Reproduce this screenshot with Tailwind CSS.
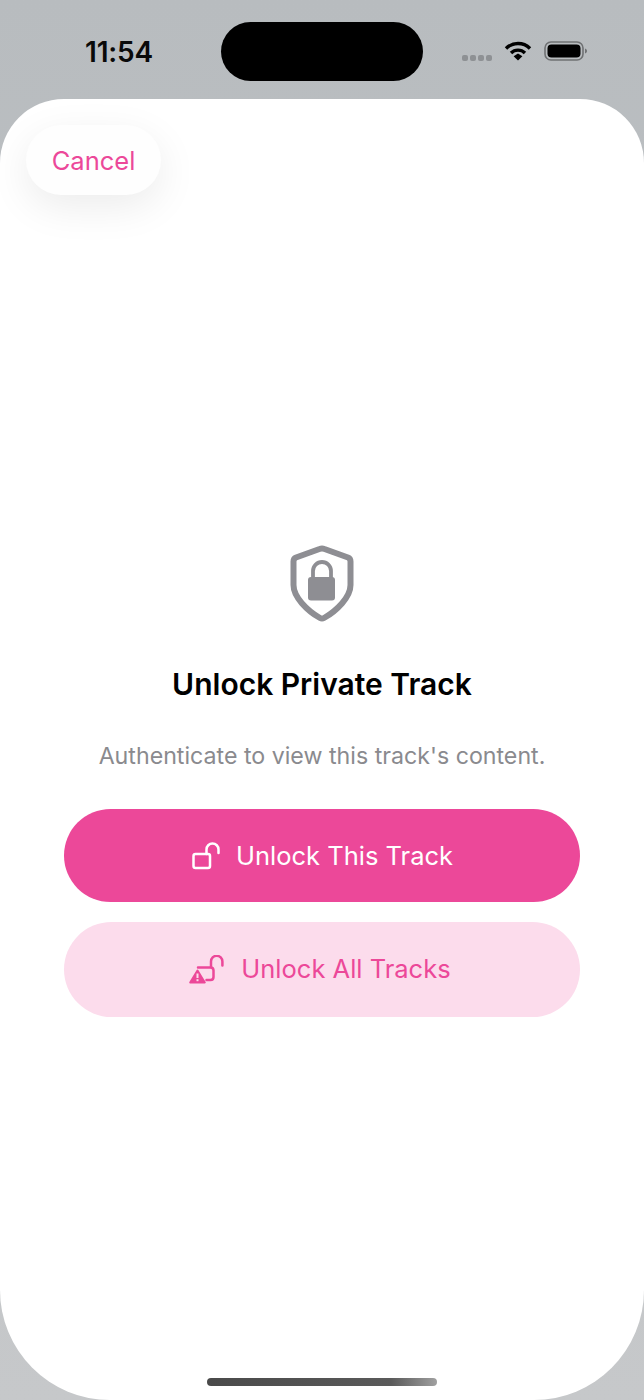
<!DOCTYPE html>
<html lang="en">
  <head>
    <meta charset="UTF-8" />
    <meta name="viewport" content="width=device-width, initial-scale=1.0" />
    <title>Unlock Private Track</title>
    <script src="https://cdn.jsdelivr.net/npm/@tailwindcss/browser@4"></script>
  </head>
  <body class="h-[1400px] w-[644px] overflow-hidden bg-linear-to-b from-[#b8bcbf] to-[#c6c8ca] font-['Inter',sans-serif]">
    <!-- Status Bar -->
    <div class="flex h-[99px] items-start pt-[22px]">
      <div class="flex h-[59px] w-[221px] items-center pl-[85px]">
        <span class="text-[28px] leading-none font-semibold tracking-[-0.2px] text-[#0a0a0a]">11:54</span>
      </div>
      <div class="h-[59px] w-[202px] rounded-full bg-black"></div>
      <div class="flex h-[59px] items-center gap-3 pl-[39px]">
        <div class="mt-3 flex gap-[2px]">
          <span class="size-[6px] rounded-[2px] bg-[#8e9194]"></span>
          <span class="size-[6px] rounded-[2px] bg-[#8e9194]"></span>
          <span class="size-[6px] rounded-[2px] bg-[#8e9194]"></span>
          <span class="size-[6px] rounded-[2px] bg-[#8e9194]"></span>
        </div>
        <svg class="-mt-[2px]" width="28" height="20" viewBox="0 0 28 20" fill="none" stroke="#000" stroke-width="3.4">
          <path d="M2 7.5A17 17 0 0 1 26 7.5" />
          <path d="M7 12A10 10 0 0 1 21 12" />
          <path d="M9.6 15.2L14 12.4L18.4 15.2L14 19.5Z" fill="#000" stroke="none" />
        </svg>
        <svg class="-mt-[2px]" width="43" height="20" viewBox="0 0 43 20" fill="none">
          <rect x="1" y="1" width="38" height="18" rx="6" stroke="#6f7173" stroke-width="1.6" />
          <rect x="3.5" y="3.5" width="33" height="13" rx="4" fill="#000" />
          <path d="M41 7.5C42.3 8 43 9 43 10C43 11 42.3 12 41 12.5Z" fill="#6f7173" />
        </svg>
      </div>
    </div>

    <!-- Sheet -->
    <div class="h-[1301px] rounded-t-[64px] rounded-b-[110px] bg-white pt-[26px]">
      <button class="ml-[26px] flex h-[70px] w-[135px] items-center justify-center rounded-full bg-[#fefefe] pt-[2px] text-[25.5px] text-[#ec4899] shadow-[0_12px_40px_rgba(0,0,0,0.08)]">
        Cancel
      </button>

      <div class="mt-[350px] flex flex-col items-center">
        <svg width="64" height="77" viewBox="0 0 64 77" fill="none">
          <path d="M29.5 4C31 3.4 33 3.4 34.5 4L58 12.5C60 13.3 60.5 14.6 60.5 16.5V40C60.5 52 47 65.5 34 73C32.6 73.8 31.4 73.8 30 73C17 65.5 3.5 52 3.5 40V16.5C3.5 14.6 4 13.3 6 12.5Z" stroke="#8e8e93" stroke-width="6" stroke-linejoin="round" />
          <path d="M23 33V26A9 9 0 0 1 41 26V33" stroke="#8e8e93" stroke-width="3.8" />
          <rect x="18" y="32" width="27" height="23.5" rx="3" fill="#8e8e93" />
        </svg>

        <h1 class="mt-[42px] text-[30px] leading-[40px] font-semibold text-black">Unlock Private Track</h1>
        <p class="mt-9 text-[23.2px] leading-8 text-[#8a8a8e]">Authenticate to view this track's content.</p>
      </div>

      <!-- Buttons -->
      <div class="mt-[37px] flex flex-col gap-5 px-16">
        <button class="flex h-[93px] items-center justify-center gap-[15px] rounded-full bg-[#ec4899] text-[25.5px] text-white">
          <svg width="30" height="28" viewBox="0 0 30 28" fill="none" stroke="#fff" stroke-width="2.5">
            <rect x="2.5" y="12" width="16.5" height="14" rx="2" />
            <path d="M15.5 12V7.5A6 6 0 0 1 27.5 7.5V11" stroke-linecap="round" />
          </svg>
          <span class="pt-[2px]">Unlock This Track</span>
        </button>
        <button class="flex h-[95px] items-center justify-center gap-4 rounded-full bg-[#fcdcec] pr-1 text-[25.5px] text-[#ec4899]">
          <svg width="36" height="30" viewBox="0 0 36 30" fill="none" stroke="#ec4899" stroke-width="2.5">
            <path d="M9 12.5H21.5C23.2 12.5 24.5 13.8 24.5 15.5V22C24.5 23.7 23.2 25 21.5 25H17.5" stroke-linecap="round" />
            <path d="M22 12V6.5A5.7 5.7 0 0 1 33.4 6.5V10.5" stroke-linecap="round" />
            <path d="M8.5 15.5L15.8 27.5H1.2Z" fill="#ec4899" stroke-linejoin="round" stroke-width="2" />
            <path d="M8.5 18.5V23" stroke="#fcdcec" stroke-width="2" />
            <rect x="7.5" y="24.2" width="2" height="2" fill="#fcdcec" stroke="none" />
          </svg>
          <span>Unlock All Tracks</span>
        </button>
      </div>

      <!-- Home Indicator -->
      <div class="mx-auto mt-[361px] h-2 w-[230px] rounded-full bg-linear-to-r from-[#4a4a4a] via-[#5a5a5a] via-80% to-[#a0a0a0]"></div>
    </div>
  </body>
</html>
